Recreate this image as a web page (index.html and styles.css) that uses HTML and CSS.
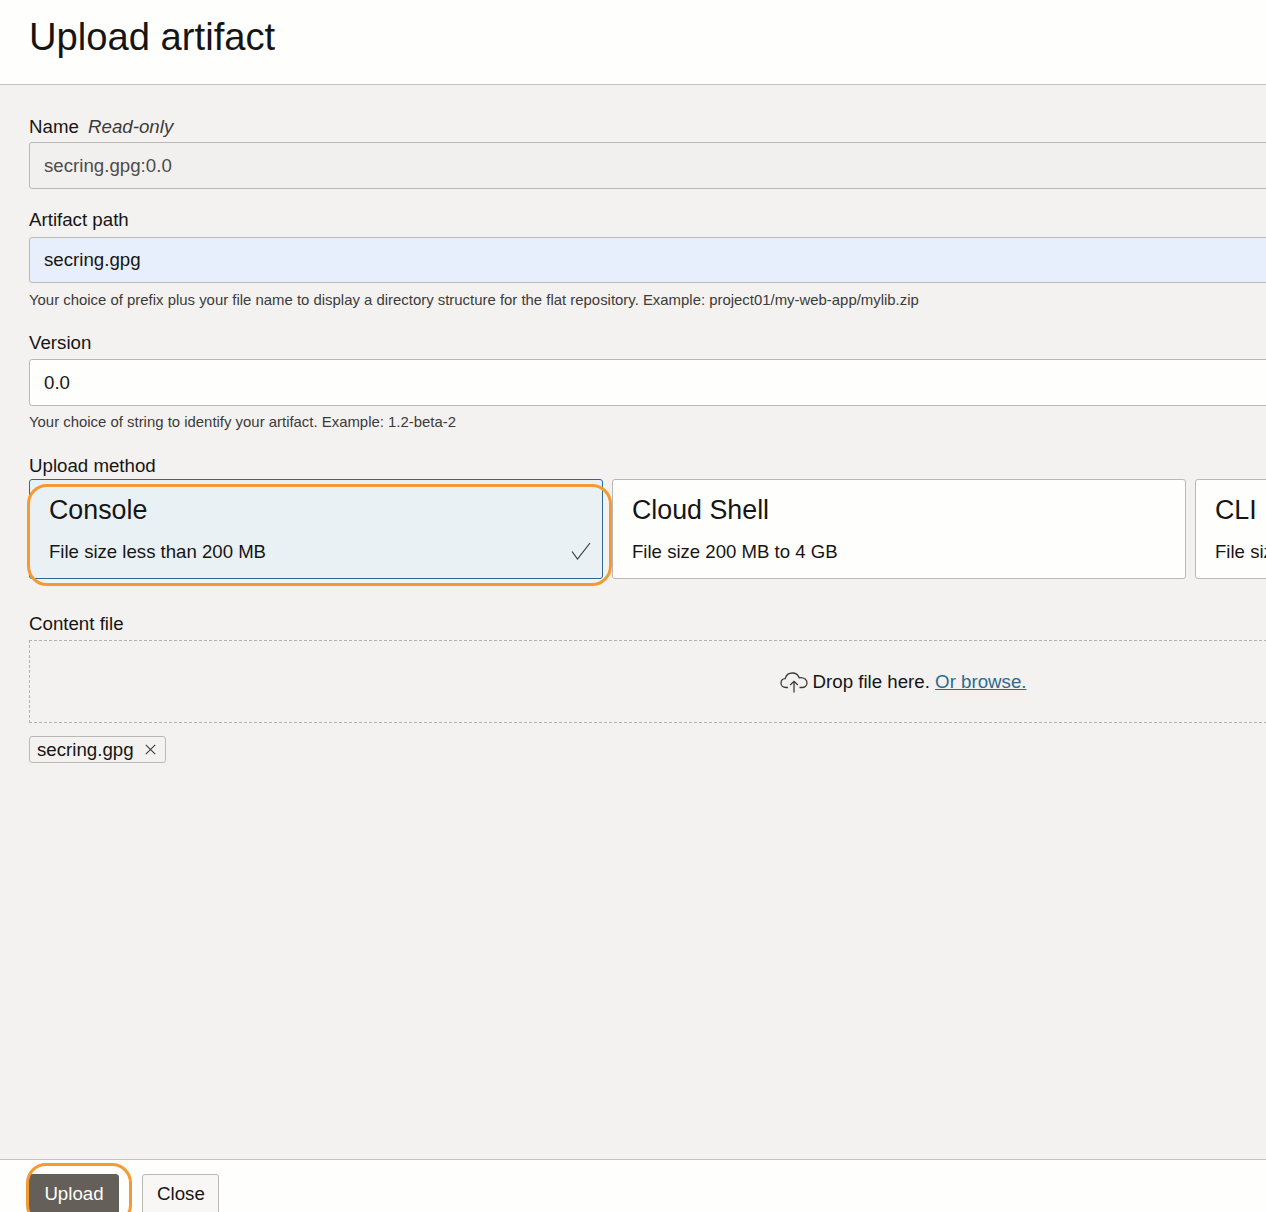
FILE: index.html
```html
<!DOCTYPE html>
<html lang="en">
<head>
    <meta charset="UTF-8">
    <meta name="viewport" content="width=device-width, initial-scale=1.0">
    <title>Upload artifact</title>
    <link rel="stylesheet" href="styles.css">
</head>
<body>
    <div class="panel">
        <header class="panel-head">
            <h1>Upload artifact</h1>
        </header>
        <main class="panel-body">
            <div class="form">
                <div class="field field-name">
                    <label>Name <em>Read-only</em></label>
                    <div class="input input-readonly">secring.gpg:0.0</div>
                </div>
                <div class="field field-path">
                    <label>Artifact path</label>
                    <div class="input input-filled">secring.gpg</div>
                    <p class="help">Your choice of prefix plus your file name to display a directory structure for the flat repository. Example: project01/my-web-app/mylib.zip</p>
                </div>
                <div class="field field-version">
                    <label>Version</label>
                    <div class="input">0.0</div>
                    <p class="help">Your choice of string to identify your artifact. Example: 1.2-beta-2</p>
                </div>
                <div class="field field-method">
                    <label>Upload method</label>
                    <div class="cards">
                        <div class="card card-selected">
                            <div class="card-title">Console</div>
                            <div class="card-text">File size less than 200 MB</div>
                            <svg class="check" width="20" height="18" viewBox="0 0 20 18"><path d="M1 9.5 L6.5 17 L19 1" fill="none" stroke="#3d3b38" stroke-width="1.2"/></svg>
                            <span class="callout callout-card"></span>
                        </div>
                        <div class="card">
                            <div class="card-title">Cloud Shell</div>
                            <div class="card-text">File size 200 MB to 4 GB</div>
                        </div>
                        <div class="card">
                            <div class="card-title">CLI</div>
                            <div class="card-text">File size greater than 4 GB</div>
                        </div>
                    </div>
                </div>
                <div class="field field-content">
                    <label>Content file</label>
                    <div class="dropzone">
                        <svg class="cloud" width="28" height="21" viewBox="0 0 28 21"><path d="M8 15.5 H6 C3 15.5 1 13.5 1 11 C1 8.6 2.8 6.9 5.2 6.7 C6 3.3 9 1 12.4 1 C15.6 1 18.2 3 19.2 5.8 C19.8 5.6 20.2 5.6 20.8 5.6 C24.2 5.6 27 7.8 27 10.8 C27 13.5 24.8 15.5 22 15.5 H19.5" fill="none" stroke="#3d3b38" stroke-width="1.3"/><path d="M14 20.5 V9.5 M10.2 13 L14 9.3 L17.8 13" fill="none" stroke="#3d3b38" stroke-width="1.3"/></svg>
                        <span>Drop file here. <a href="#">Or browse.</a></span>
                    </div>
                    <div class="chip">secring.gpg
                        <svg width="11" height="11" viewBox="0 0 11 11"><path d="M0.8 0.8 L10.2 10.2 M10.2 0.8 L0.8 10.2" fill="none" stroke="#3d3b38" stroke-width="1.1"/></svg>
                    </div>
                </div>
            </div>
        </main>
        <footer class="panel-foot">
            <button class="btn btn-primary">Upload<span class="callout callout-btn"></span></button>
            <button class="btn btn-close">Close</button>
        </footer>
    </div>
</body>
</html>
```

FILE: styles.css
```css
* {
    box-sizing: border-box;
}
html, body {
    margin: 0;
    height: 100%;
    overflow: hidden;
}
body {
    font-family: 'Liberation Sans', Arial, sans-serif;
    font-size: 18.7px;
    color: #161513;
    background: #f3f2f1;
}
.panel {
    display: flex;
    flex-direction: column;
    height: 100vh;
}
.panel-head {
    height: 85px;
    flex: none;
    padding: 15px 29px 0;
    background: #fefefd;
    border-bottom: 1px solid #c4c1bd;
}
h1 {
    margin: 0;
    font-size: 38.2px;
    line-height: 44px;
    font-weight: 400;
}
.panel-body {
    flex: 1;
    padding: 0 0 0 29px;
    overflow: hidden;
}
.form {
    width: 1748px;
}
label {
    display: block;
    height: 22px;
    line-height: 24px;
}
label em {
    margin-left: 4px;
    color: #3d3b38;
}
.field-name {
    padding-top: 30px;
}
.field-path {
    margin-top: 19px;
}
.field-version {
    margin-top: 22px;
}
.field-version .help {
    margin-top: 7px;
}
.field-method {
    margin-top: 23px;
}
.field-content {
    margin-top: 33px;
}
.input {
    height: 47px;
    margin-top: 5px;
    padding: 0 14px;
    line-height: 47px;
    background: #fefefd;
    border: 1px solid #bcb9b5;
    border-radius: 3px;
}
.field-path .input {
    height: 46px;
    margin-top: 7px;
    line-height: 44px;
}
.field-version .input {
    margin-top: 6px;
    line-height: 45px;
}
.input-readonly {
    background: #f1f0ef;
    color: #4f4c49;
    line-height: 45px;
}
.input-filled {
    background: #e8effc;
}
.help {
    margin: 8px 0 0;
    font-size: 14.92px;
    line-height: 18px;
    color: #3d3b38;
}
.cards {
    display: flex;
    gap: 9px;
    margin-top: 3px;
}
.card {
    position: relative;
    width: 574px;
    height: 100px;
    padding: 13px 19px 0;
    background: #fefefd;
    border: 1px solid #bcb9b5;
    border-radius: 3px;
}
.card-title {
    font-size: 26.8px;
    line-height: 34px;
}
.card-text {
    margin-top: 13px;
    line-height: 24px;
    font-size: 18.6px;
}
.card-selected {
    background: #e9f1f5;
    border-color: #2c6b8f;
}
.check {
    position: absolute;
    right: 11px;
    bottom: 18px;
}
.callout {
    position: absolute;
    border: 3px solid #f59a33;
    pointer-events: none;
}
.callout-card {
    left: -3px;
    top: 4px;
    width: 585px;
    height: 102px;
    border-radius: 20px;
}
.dropzone {
    display: flex;
    align-items: center;
    justify-content: center;
    gap: 5px;
    height: 83px;
    margin-top: 6px;
    border: 1px dashed #b5b2ae;
}
.dropzone a {
    color: #2c6b8f;
}
.cloud {
    margin-top: 1px;
}
.chip {
    display: inline-flex;
    align-items: center;
    gap: 11px;
    height: 27px;
    margin-top: 13px;
    padding: 0 9px 0 7px;
    border: 1px solid #bcb9b5;
    border-radius: 3px;
    background: #f3f2f1;
}
.panel-foot {
    flex: none;
    display: flex;
    gap: 23px;
    height: 53px;
    padding: 14px 0 0 29px;
    background: #fefefd;
    border-top: 1px solid #c4c1bd;
}
.btn {
    position: relative;
    height: 44px;
    padding: 0 14px 4px;
    font-family: inherit;
    font-size: 18.7px;
    color: #161513;
    background: #f8f7f6;
    border: 1px solid #bcb9b5;
    border-radius: 3px;
}
.btn-primary {
    width: 90px;
    color: #fefefd;
    background: #655f59;
    border-color: #655f59;
}
.btn-close {
    width: 77px;
}
.callout-btn {
    left: -4px;
    top: -12px;
    width: 106px;
    height: 62px;
    border-radius: 20px;
}
```
